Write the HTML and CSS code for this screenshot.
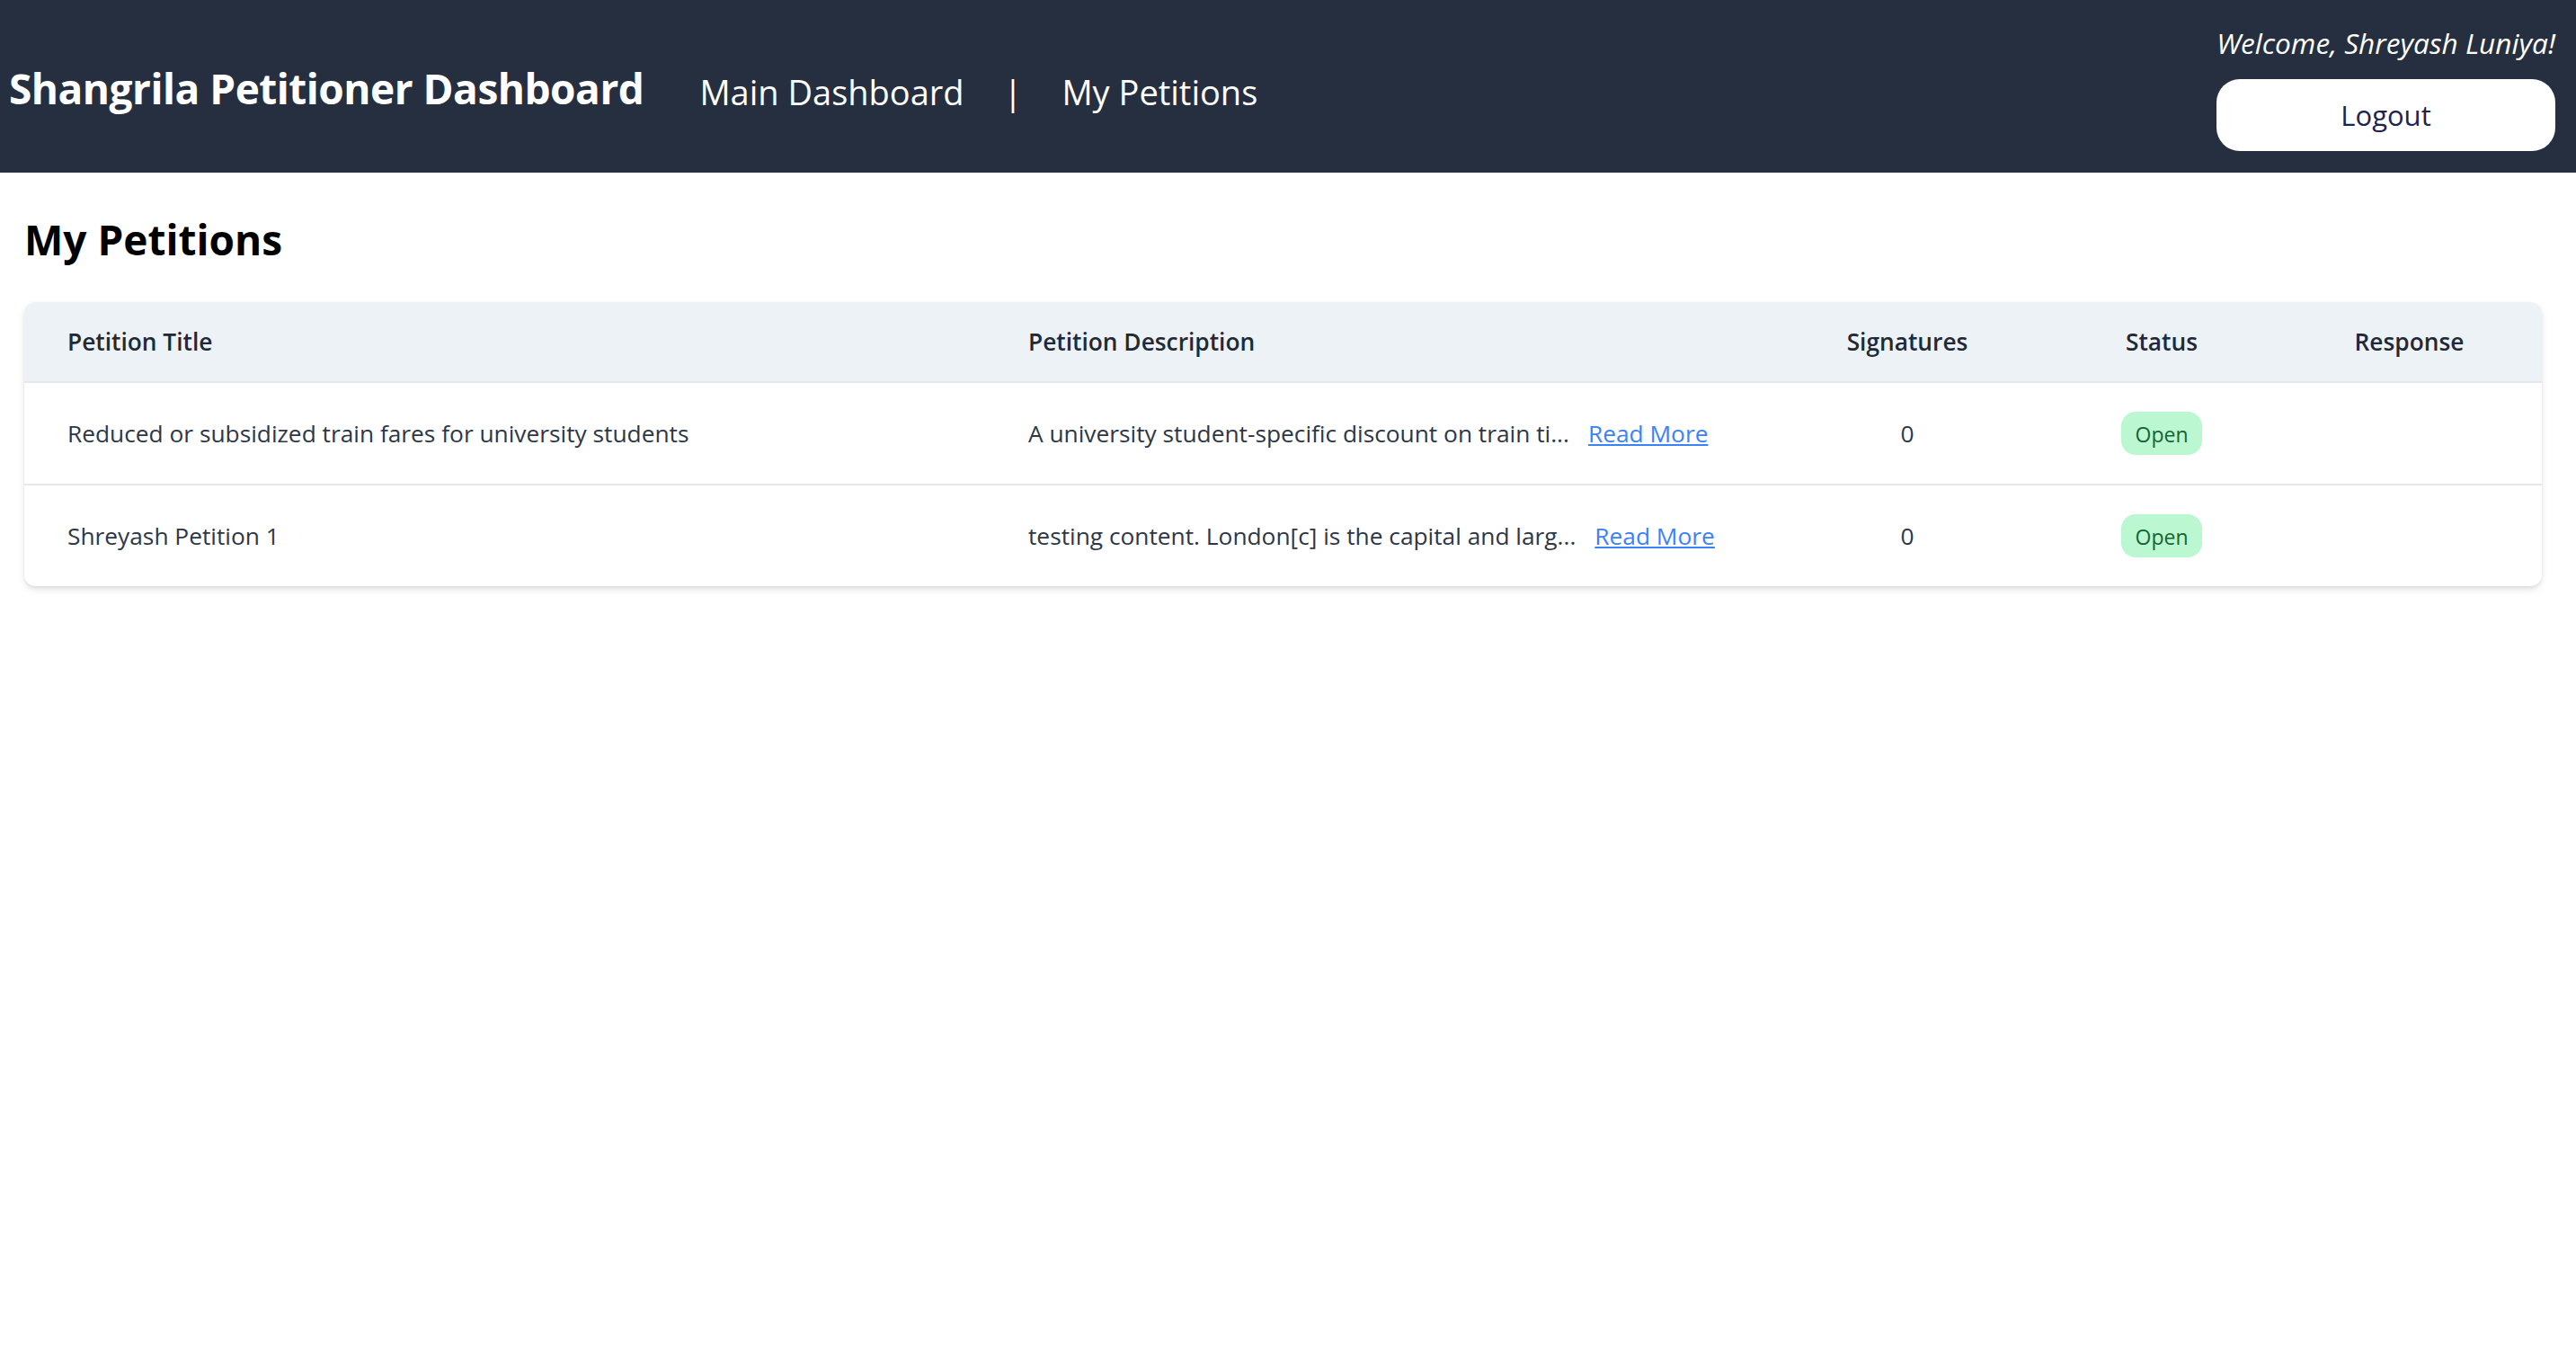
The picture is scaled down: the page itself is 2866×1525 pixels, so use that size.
FILE: index.html
```html
<!DOCTYPE html>
<html lang="en">
<head>
<meta charset="utf-8">
<title>Shangrila Petitioner Dashboard</title>
<link rel="stylesheet" href="styles.css">
</head>
<body>
<header class="topbar">
  <div class="brand-nav">
    <h1 class="brand">Shangrila Petitioner Dashboard</h1>
    <nav class="nav">
      <a class="nav-link" href="#">Main Dashboard</a>
      <span class="nav-sep">|</span>
      <a class="nav-link" href="#">My Petitions</a>
    </nav>
  </div>
  <div class="user">
    <p class="welcome">Welcome, Shreyash Luniya!</p>
    <button class="logout" type="button">Logout</button>
  </div>
</header>
<main class="content">
  <h2 class="page-title">My Petitions</h2>
  <div class="card">
    <table class="petitions">
      <colgroup>
        <col class="col-title">
        <col class="col-desc">
        <col class="col-sig">
        <col class="col-status">
        <col class="col-resp">
      </colgroup>
      <thead>
        <tr>
          <th class="cell-left">Petition Title</th>
          <th class="cell-left">Petition Description</th>
          <th class="cell-center">Signatures</th>
          <th class="cell-center">Status</th>
          <th class="cell-center">Response</th>
        </tr>
      </thead>
      <tbody>
        <tr>
          <td class="cell-left">Reduced or subsidized train fares for university students</td>
          <td class="cell-left">A university student-specific discount on train ti...<a class="read-more" href="#">Read More</a></td>
          <td class="cell-center">0</td>
          <td class="cell-center"><span class="badge">Open</span></td>
          <td class="cell-center"></td>
        </tr>
        <tr>
          <td class="cell-left">Shreyash Petition 1</td>
          <td class="cell-left">testing content. London[c] is the capital and larg...<a class="read-more" href="#">Read More</a></td>
          <td class="cell-center">0</td>
          <td class="cell-center"><span class="badge">Open</span></td>
          <td class="cell-center"></td>
        </tr>
      </tbody>
    </table>
  </div>
</main>
</body>
</html>
```
FILE: styles.css
```css
* { box-sizing: border-box; }

html, body {
  margin: 0;
  padding: 0;
  background: #ffffff;
  font-family: "Open Sans", "Noto Sans", "Liberation Sans", sans-serif;
  color: #1f2937;
}

.topbar {
  height: 192px;
  background: #262f40;
  display: flex;
  justify-content: space-between;
  align-items: stretch;
  padding: 0 23px 0 10px;
  color: #ffffff;
}

.brand-nav {
  display: flex;
  align-items: center;
  gap: 62px;
  padding-top: 6px;
}

.brand {
  margin: 0;
  font-size: 46px;
  font-weight: 700;
  letter-spacing: -0.5px;
  line-height: 1.2;
}

.nav {
  display: flex;
  align-items: center;
  gap: 44px;
  padding-top: 7px;
  font-size: 38px;
  line-height: 1.2;
}

.nav-link {
  color: #ffffff;
  text-decoration: none;
}

.nav-sep {
  color: #ffffff;
}

.user {
  display: flex;
  flex-direction: column;
  align-items: flex-end;
  padding-top: 24px;
}

.welcome {
  margin: 0 0 16px 0;
  font-size: 31.6px;
  line-height: 48px;
  font-style: italic;
  color: #ffffff;
}

.logout {
  width: 377px;
  height: 80px;
  border: none;
  border-radius: 26px;
  background: #ffffff;
  color: #1c2452;
  font-family: inherit;
  font-size: 31px;
  cursor: pointer;
}

.content {
  padding: 0 38px 40px 27px;
}

.page-title {
  margin: 0;
  padding: 47px 0 42px 0;
  font-size: 46px;
  font-weight: 700;
  line-height: 1.2;
  color: #000000;
}

.card {
  background: #ffffff;
  border-radius: 13px;
  overflow: hidden;
  box-shadow: 0 4px 8px -1px rgba(0, 0, 0, 0.12), 0 2px 5px -1px rgba(0, 0, 0, 0.07);
}

.petitions {
  width: 100%;
  table-layout: fixed;
  border-collapse: separate;
  border-spacing: 0;
  font-size: 26.3px;
}

.col-title { width: 1069px; }
.col-desc { width: 871px; }
.col-sig { width: 310px; }
.col-status { width: 256px; }
.col-resp { width: auto; }

.petitions th {
  height: 88px;
  padding: 0 48px;
  background: #edf2f6;
  font-weight: 600;
  color: #1f2937;
  vertical-align: middle;
}

.petitions td {
  height: 114px;
  padding: 0 48px;
  border-top: 2px solid #e5e7eb;
  color: #2d3748;
  vertical-align: middle;
  white-space: nowrap;
}

.cell-left { text-align: left; }
.cell-center { text-align: center; }

.read-more {
  margin-left: 21px;
  color: #3b82f6;
  text-decoration: underline;
}

.badge {
  display: inline-block;
  padding: 0 16px;
  height: 48px;
  line-height: 50px;
  border-radius: 16px;
  background: #bbf7d0;
  color: #166534;
  font-size: 23px;
  vertical-align: middle;
}
```
